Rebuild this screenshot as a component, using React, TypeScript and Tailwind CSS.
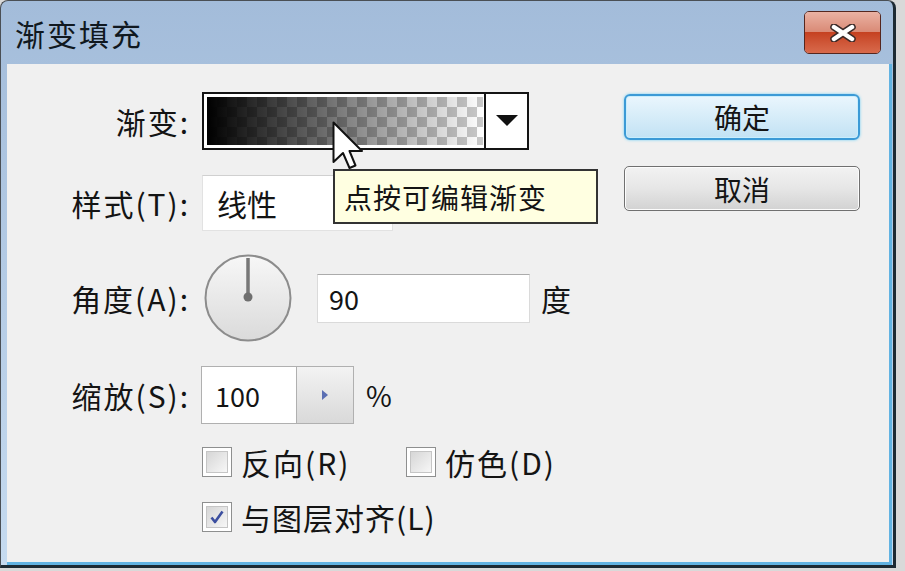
import React from 'react';

const font = "font-['Noto_Sans_CJK_SC','Liberation_Sans',sans-serif]";

function Checkbox({ checked }: { checked?: boolean }) {
  return (
    <div className="w-[30px] h-[30px] border border-[#8e8f8f] bg-white p-[3px] shrink-0">
      <div className="w-full h-full border border-[#c5c5c5] bg-linear-to-br from-[#d6d6d6] to-[#f7f7f7] flex items-center justify-center">
        {checked && (
          <svg width="16" height="16" viewBox="0 0 16 16">
            <path d="M2.5 8.5 L6 13 L13.5 2.5" fill="none" stroke="#3c4fa0" strokeWidth="2.6" strokeLinejoin="round" />
          </svg>
        )}
      </div>
    </div>
  );
}

function Label({ children }: { children: React.ReactNode }) {
  return <div className="w-[183px] text-right shrink-0 tracking-[2px]">{children}</div>;
}

export default function App() {
  return (
    <div className={`relative w-[905px] h-[571px] bg-[#d9d9d9] overflow-hidden text-[30px] leading-none text-[#141414] ${font}`}>
      {/* window */}
      <div className="w-[896px] h-[568px] flex flex-col rounded-t-[8px] border-l border-t border-[#4a4f55] border-r-[3px] border-b-[3px] border-r-[#1d2a33] border-b-[#1d2a33] bg-linear-to-b from-[#a3bcda] to-[#c6dbf0]">
        {/* title bar */}
        <div className="h-[63px] flex items-center justify-between pl-[14px] pr-[12px] shrink-0">
          <span className="text-[30px] text-[#101820] tracking-[2px]">渐变填充</span>
          <div className="w-[77px] h-[43px] rounded-[5px] border border-[#55271f] overflow-hidden relative mt-[-1px]">
            <div className="h-1/2 bg-linear-to-b from-[#eab2a3] to-[#d98a76]" />
            <div className="h-1/2 bg-linear-to-b from-[#c5401f] to-[#d86a4c]" />
            <svg className="absolute left-[24px] top-[12px]" width="28" height="18" viewBox="0 0 28 18">
              <path d="M5 3 L23 15 M23 3 L5 15" stroke="#3b2a28" strokeWidth="7.5" strokeLinecap="round" />
              <path d="M5 3 L23 15 M23 3 L5 15" stroke="#ffffff" strokeWidth="4.5" strokeLinecap="round" />
            </svg>
          </div>
        </div>
        {/* content */}
        <div className="flex-1 ml-[6px] mr-[1px] border-r-[3px] border-b-[3px] border-[#62b3e2] bg-[#f0f0f0] flex">
          <div className="flex flex-col pt-[28px]">
            {/* gradient */}
            <div className="flex items-center gap-[12px] h-[58px]">
              <Label>渐变:</Label>
              <div className="w-[327px] h-[58px] border-2 border-[#141414] bg-white flex">
                <div className="flex-1 p-[3px] pr-[1px]">
                  <div className="w-full h-full bg-[conic-gradient(#c9c9c9_25%,#ffffff_0_50%,#c9c9c9_0_75%,#ffffff_0)] bg-[length:20px_20px]">
                    <div className="w-full h-full bg-linear-to-r from-[#000000] to-transparent" />
                  </div>
                </div>
                <div className="w-[43px] border-l-2 border-[#141414] flex items-center justify-center bg-white">
                  <svg width="22" height="12" viewBox="0 0 22 12">
                    <path d="M0 0 H22 L11 11 Z" fill="#111" />
                  </svg>
                </div>
              </div>
            </div>
            {/* style */}
            <div className="flex items-center gap-[12px] h-[56px] mt-[25px]">
              <Label>样式(T):</Label>
              <div className="w-[191px] h-[56px] bg-white border border-[#e2e2e2] border-t-[#d0d0d0] flex items-center pl-[14px]">线性</div>
            </div>
            {/* angle */}
            <div className="flex items-center h-[86px] mt-[24px]">
              <Label>角度(A):</Label>
              <svg className="ml-[12px]" width="92" height="88" viewBox="0 0 92 88">
                <defs>
                  <linearGradient id="dial" x1="0" y1="0" x2="0" y2="1">
                    <stop offset="0" stopColor="#f7f7f7" />
                    <stop offset="1" stopColor="#dadada" />
                  </linearGradient>
                </defs>
                <circle cx="46" cy="44" r="42.5" fill="url(#dial)" stroke="#8c8c8c" strokeWidth="2" />
                <line x1="46" y1="44" x2="46" y2="4" stroke="#777777" strokeWidth="3.5" />
                <circle cx="46" cy="43" r="4.5" fill="#6f6f6f" />
              </svg>
              <div className="ml-[23px] w-[213px] h-[49px] bg-white border border-[#dadada] border-t-[#ababab] flex items-center pl-[11px] text-[27px]">90</div>
              <span className="ml-[11px]">度</span>
            </div>
            {/* scale */}
            <div className="flex items-center gap-[12px] h-[58px] mt-[25px]">
              <Label>缩放(S):</Label>
              <div className="h-[58px] flex border border-[#b0b0b0] -ml-[1px]">
                <div className="w-[94px] bg-white flex items-center pl-[13px] text-[27px]">100</div>
                <div className="w-[57px] border-l border-[#b0b0b0] bg-linear-to-b from-[#f3f3f3] to-[#d9d9d9] flex items-center justify-center">
                  <svg width="8" height="10" viewBox="0 0 8 10">
                    <path d="M1 0 L7 5 L1 10 Z" fill="#5b6fb3" />
                  </svg>
                </div>
              </div>
              <span className="text-[28px]">%</span>
            </div>
            {/* checkboxes */}
            <div className="flex items-center h-[32px] mt-[22px] pl-[195px]">
              <div className="w-[204px] flex items-center gap-[9px]">
                <Checkbox />
                <span className="tracking-[2px]">反向(R)</span>
              </div>
              <div className="flex items-center gap-[9px]">
                <Checkbox />
                <span className="tracking-[2px]">仿色(D)</span>
              </div>
            </div>
            <div className="flex items-center h-[30px] mt-[24px] pl-[195px]">
              <div className="flex items-center gap-[9px]">
                <Checkbox checked />
                <span className="tracking-[1px]">与图层对齐(L)</span>
              </div>
            </div>
          </div>
          {/* buttons */}
          <div className="ml-auto mr-[29px] pt-[30px] flex flex-col gap-[26px]">
            <button className={`w-[236px] h-[46px] rounded-[6px] border-2 border-[#3c9ad6] shadow-[0_0_3px_#6fd0f5,inset_0_0_0_1px_#c9eefd] bg-linear-to-b from-[#eaf6fd] to-[#c2e2f4] flex items-center justify-center text-[28px] text-[#141414] ${font}`}>确定</button>
            <button className={`w-[236px] h-[45px] rounded-[5px] border border-[#707070] shadow-[inset_0_0_0_1px_#fcfcfc] bg-linear-to-b from-[#f2f2f2] via-[#e6e6e6] to-[#d2d2d2] flex items-center justify-center text-[28px] text-[#141414] ${font}`}>取消</button>
          </div>
        </div>
      </div>

      {/* tooltip */}
      <div className="absolute left-[333px] top-[169px] w-[265px] h-[55px] bg-[#ffffe1] border-2 border-[#333333] flex items-center pl-[9px] text-[28px] tracking-[1px]">点按可编辑渐变</div>

      {/* cursor */}
      <svg className="absolute left-[332px] top-[121px]" width="34" height="52" viewBox="0 0 34 52">
        <path d="M1.5 1.5 L1.5 41 L11 32 L17.5 47 L23.5 44.5 L17.5 30 L30 30 Z" fill="#ffffff" stroke="#111" strokeWidth="2" strokeLinejoin="round" />
      </svg>
    </div>
  );
}
